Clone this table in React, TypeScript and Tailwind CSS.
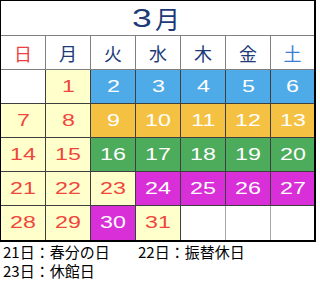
import React from "react";

type Tone = "none" | "yellow" | "blue" | "orange" | "green" | "magenta";

const toneClass: Record<Tone, string> = {
  none: "bg-white",
  yellow: "bg-[#ffffcc] text-[#f0463c]",
  blue: "bg-[#4faae8] text-white",
  orange: "bg-[#f4c142] text-white",
  green: "bg-[#4dab5c] text-white",
  magenta: "bg-[#d82fd8] text-white",
};

const weeks: [number | null, Tone][][] = [
  [[null, "none"], [1, "yellow"], [2, "blue"], [3, "blue"], [4, "blue"], [5, "blue"], [6, "blue"]],
  [[7, "yellow"], [8, "yellow"], [9, "orange"], [10, "orange"], [11, "orange"], [12, "orange"], [13, "orange"]],
  [[14, "yellow"], [15, "yellow"], [16, "green"], [17, "green"], [18, "green"], [19, "green"], [20, "green"]],
  [[21, "yellow"], [22, "yellow"], [23, "yellow"], [24, "magenta"], [25, "magenta"], [26, "magenta"], [27, "magenta"]],
  [[28, "yellow"], [29, "yellow"], [30, "magenta"], [31, "yellow"], [null, "none"], [null, "none"], [null, "none"]],
];

const weekdays = [
  { label: "日", color: "text-[#ef3f3f]" },
  { label: "月", color: "text-[#203a78]" },
  { label: "火", color: "text-[#203a78]" },
  { label: "水", color: "text-[#203a78]" },
  { label: "木", color: "text-[#203a78]" },
  { label: "金", color: "text-[#203a78]" },
  { label: "土", color: "text-[#3b7fd4]" },
];

const jp = "font-['Noto_Sans_CJK_JP',sans-serif]";
const num = "font-['Liberation_Sans',Arial,sans-serif]";

export default function App() {
  return (
    <div className="w-[320px] h-[282px] bg-white overflow-hidden">
      {/* Calendar table */}
      <div className="w-[316px] border-l border-t border-r-2 border-b-2 border-black grid grid-cols-[repeat(6,45px)_43px]">
        <div className="col-span-7 h-[35px] border-b border-[#808080] flex items-center justify-center text-[#203a78]">
          <span className={`${num} inline-block text-[25px] leading-none scale-x-[1.42] mr-[6px]`}>3</span>
          <span className={`${jp} text-[25px] leading-none`}>月</span>
        </div>

        {weekdays.map((d, i) => (
          <div
            key={d.label}
            className={`h-[34px] border-b border-[#808080] flex items-center justify-center ${jp} text-[18px] leading-none ${d.color} ${i < 6 ? "border-r" : ""}`}
          >
            {d.label}
          </div>
        ))}

        {weeks.map((week, r) =>
          week.map(([n, tone], c) => (
            <div
              key={`${r}-${c}`}
              className={`h-[34px] flex items-center justify-center ${toneClass[tone]} ${c < 6 ? "border-r" : ""} ${r < 4 ? "border-b" : ""} ${tone === "none" && r === 4 ? "border-[#a6a6a6]" : "border-[#3f3f3f]"}`}
            >
              {n !== null && (
                <span className={`${num} inline-block text-[16px] leading-none scale-x-[1.45]`}>{n}</span>
              )}
            </div>
          ))
        )}
      </div>

      {/* Notes */}
      <div className={`${jp} text-[15px] leading-[19px] text-black pl-[3px]`}>
        <div className="flex">
          <span className="w-[135px]">21日：春分の日</span>
          <span>22日：振替休日</span>
        </div>
        <div>23日：休館日</div>
      </div>
    </div>
  );
}
